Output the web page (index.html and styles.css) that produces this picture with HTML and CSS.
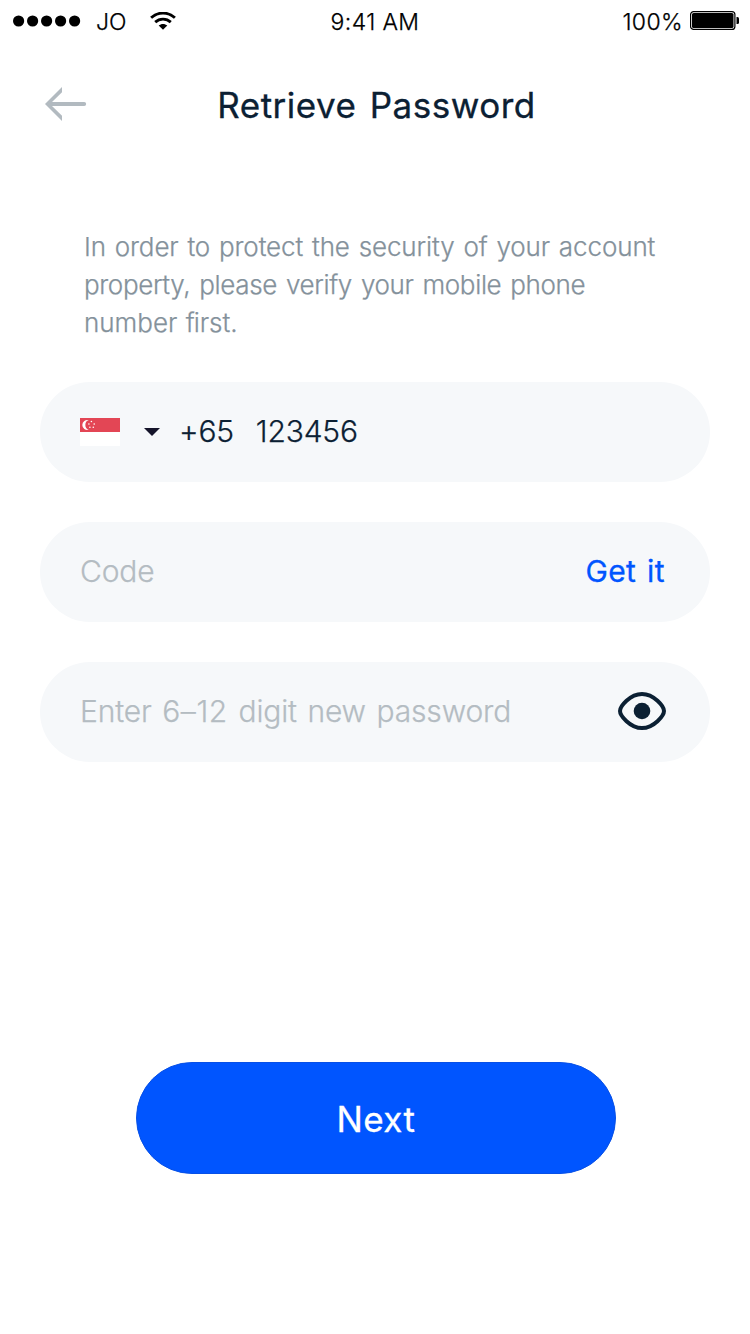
FILE: index.html
```html
<!DOCTYPE html>
<html lang="en">
<head>
<meta charset="utf-8">
<title>Retrieve Password</title>
<link rel="stylesheet" href="styles.css">
</head>
<body>
<div class="status">
  <div class="status-left">
    <svg class="dots" width="68" height="12" viewBox="0 0 68 12"><circle cx="5.6" cy="6" r="5.6"/><circle cx="19.6" cy="6" r="5.6"/><circle cx="33.6" cy="6" r="5.6"/><circle cx="47.6" cy="6" r="5.6"/><circle cx="61.6" cy="6" r="5.6"/></svg>
    <span class="carrier">JO</span>
    <svg class="wifi" width="26" height="18" viewBox="0 0 26 18"><path d="M1.1 5.8C8-.5 18-.5 24.9 5.8M5.2 10.1c4.500-4 11.100-4 15.600 0" fill="none" stroke="#000" stroke-width="2.900"/><path d="M8.700 13.500c2.500-2.100 6.100-2.100 8.600 0L13 17.800z"/></svg>
  </div>
  <span class="time">9:41 AM</span>
  <div class="status-right">
    <span class="percent">100%</span>
    <svg width="50" height="20" viewBox="0 0 50 20"><rect x=".6" y=".6" width="44.300" height="17.800" rx="3" fill="none" stroke="#000" stroke-width="1.200"/><rect x="2" y="2" width="41.500" height="15" rx="1.600"/><path d="M46.500 6h1q1.500 0 1.500 1.500v4q0 1.500-1.500 1.500h-1z"/></svg>
  </div>
</div>
<header class="header">
  <svg class="back" width="42" height="34" viewBox="0 0 42 34"><path d="M17 0v5.200L7 15h32.200a1.900 1.900 0 0 1 0 3.900H7l10 9.800V34L0 17z" fill="#b2bac0"/></svg>
  <h1 class="title">Retrieve Password</h1>
</header>
<main class="content">
  <p class="intro"><span class="line1">In order to protect the security of your account</span><br><span class="line2">property, please verify your mobile phone</span><br><span class="line3">number <span class="tight">f</span>irst.</span></p>
  <div class="field">
    <svg class="flag" width="40" height="28" viewBox="0 0 40 28"><path d="M0 0h40v28H0z" fill="#fff"/><path d="M0 0h40v14H0z" fill="#e34655"/><path d="M8.800 2.100a5.100 5.100 0 1 0 0 9.800 5.200 5.200 0 0 1 0-9.800z" fill="#fff"/><g fill="#fff"><circle cx="11.400" cy="3.500" r=".8"/><circle cx="8.900" cy="6" r=".8"/><circle cx="14.200" cy="6" r=".8"/><circle cx="9.900" cy="9.300" r=".8"/><circle cx="13.300" cy="9.300" r=".8"/></g></svg>
    <svg class="caret" width="16" height="8" viewBox="0 0 16 8"><path d="M0 0h16L8 8z" fill="#15142a"/></svg>
    <span class="prefix">+65</span>
    <span class="number">123456</span>
  </div>
  <div class="field">
    <span class="hint code">Code</span>
    <span class="getit">Get it</span>
  </div>
  <div class="field">
    <span class="hint newpass">Enter <span class="range">6–12</span> digit new password</span>
    <svg class="eye" width="48" height="38" viewBox="0 0 48 38"><path d="M2 19C2 14.500 12 2 24 2s22 12.500 22 17-10 17-22 17S2 23.500 2 19z" fill="none" stroke="#0b2033" stroke-width="4"/><circle cx="24" cy="19" r="8.300" fill="#0b2033"/></svg>
  </div>
  <button class="next">Next</button>
</main>
</body>
</html>
```
FILE: styles.css
```css
* { box-sizing: border-box; }
body {
  margin: 0;
  width: 750px;
  height: 1334px;
  overflow: hidden;
  background: #fff;
  color: #0b2033;
  font-family: Inter, "Liberation Sans", sans-serif;
  font-weight: 300;
  -webkit-text-stroke: .25px currentColor;
  white-space: nowrap;
}
.status {
  display: grid;
  grid-template-columns: 1fr auto 1fr;
  height: 40px;
  padding: 1px 10px 0 13px;
  align-items: center;
  color: #000;
  font-size: 23px;
  line-height: 38px;
}
.status-left, .status-right { display: flex; align-items: center; }
.status-right { justify-content: flex-end; gap: 7px; }
.carrier { margin-left: 15px; padding-top: 1px; }
.wifi { margin-left: 23px; }
.time { padding: 2px 3px 0 0; letter-spacing: .4px; }
.percent { padding-top: 1px; letter-spacing: .4px; }
.header {
  display: grid;
  grid-template-columns: 160px 1fr 160px;
  align-items: center;
  height: 128px;
}
.back { margin-left: 45px; }
.title {
  margin: 0;
  padding: 2px 0 0 3px;
  font-size: 35px;
  font-weight: 400;
  line-height: 44px;
  letter-spacing: .5px;
  word-spacing: 3px;
  text-align: center;
  -webkit-text-stroke: .3px currentColor;
}
.content { display: flex; flex-direction: column; padding: 0 40px; }
.intro { margin: 60px 0 40px 44px; font-size: 26px; line-height: 38px; color: #84919b; }
.line1 { letter-spacing: -.1px; word-spacing: 1.6px; }
.line2 { letter-spacing: -.35px; word-spacing: 2px; }
.line3 { word-spacing: 1px; }
.tight { letter-spacing: -1px; }
.field {
  display: flex;
  align-items: center;
  height: 100px;
  margin-bottom: 40px;
  padding: 0 44px 2px 40px;
  border-radius: 50px;
  background: #f6f8fa;
  font-size: 30px;
  line-height: 40px;
}
.flag { margin-top: 2px; }
.caret { margin: 2px 0 0 24px; }
.prefix { margin-left: 19px; letter-spacing: -.2px; }
.number { margin-left: 22px; letter-spacing: -.2px; }
.hint { color: #b4bcc2; letter-spacing: -.15px; }
.newpass { letter-spacing: -.15px; word-spacing: 2.3px; }
.range { letter-spacing: .6px; }
.getit {
  margin-left: auto;
  padding-right: 1px;
  color: #0055ff;
  font-weight: 400;
  letter-spacing: .4px;
  word-spacing: 2px;
  -webkit-text-stroke: .3px currentColor;
}
.eye { margin-left: auto; }
.next {
  align-self: center;
  width: 480px;
  height: 112px;
  margin: 260px 0 0 2px;
  padding: 2px 0 0;
  border: 1px solid #0750e6;
  border-radius: 56px;
  background: #0055ff;
  color: #fff;
  font: 400 35px/44px Inter, "Liberation Sans", sans-serif;
  letter-spacing: .4px;
  -webkit-text-stroke: .3px currentColor;
}
```
